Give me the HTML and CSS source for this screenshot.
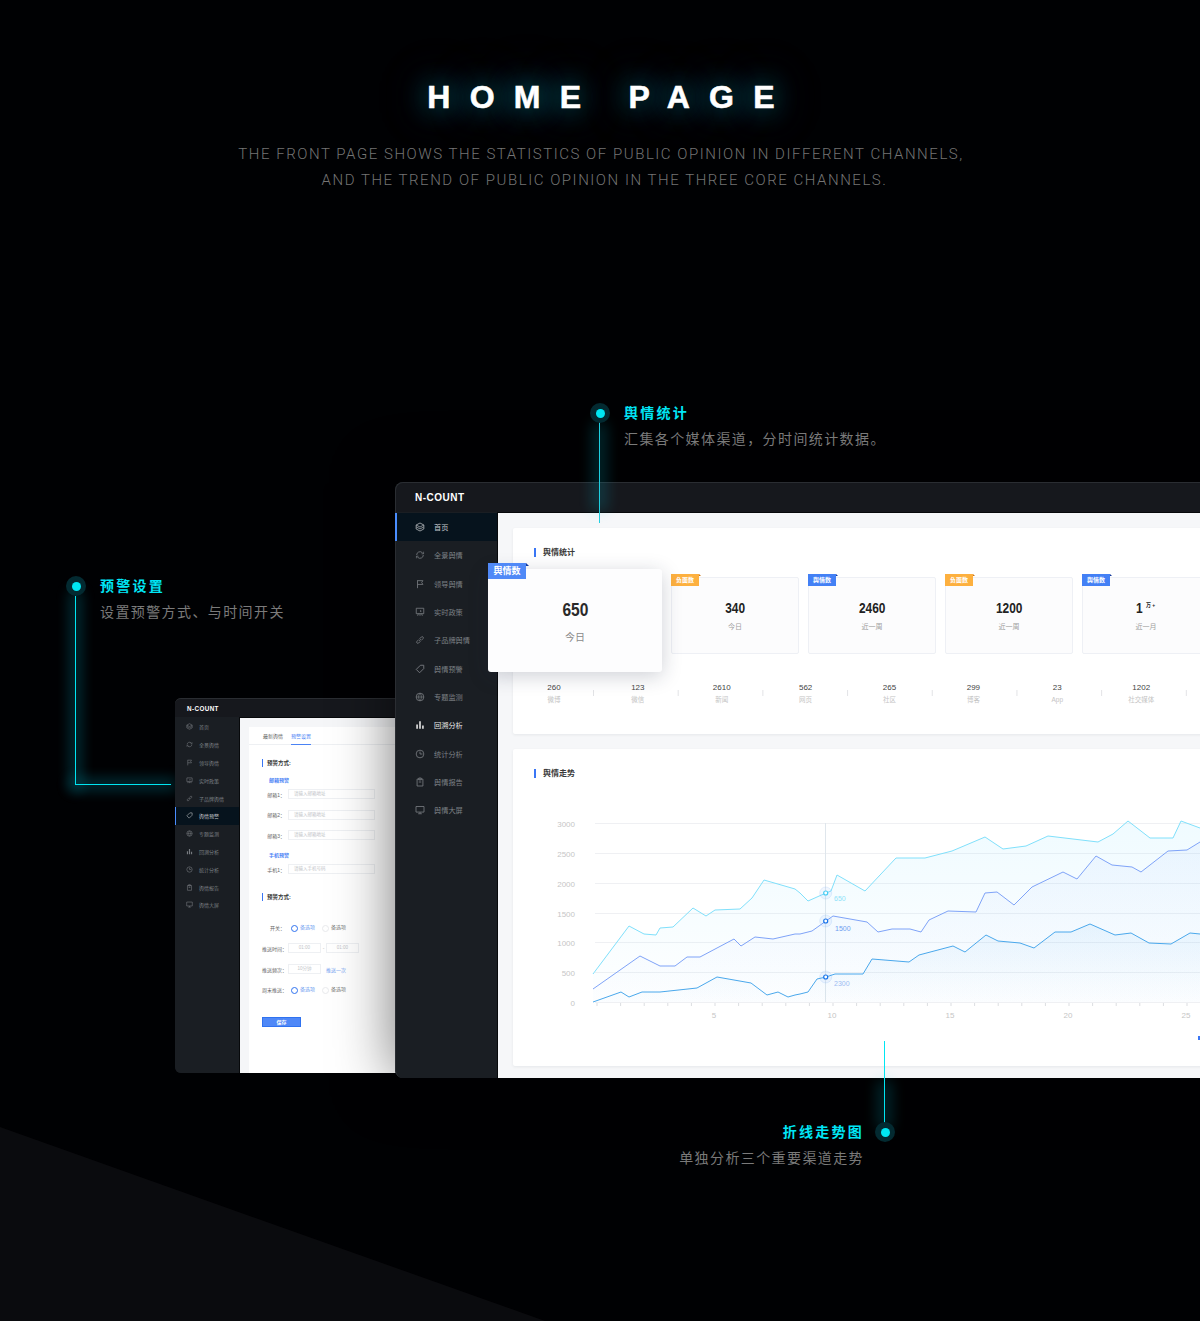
FILE: index.html
```html
<!DOCTYPE html>
<html lang="zh">
<head>
<meta charset="utf-8">
<title>Home Page</title>
<link rel="stylesheet" href="styles.css">
</head>
<body>
<svg class="defs" width="0" height="0" aria-hidden="true">
  <symbol id="i-cube" viewBox="0 0 12 12"><path d="M6 1.2 10.6 3.6V8.4L6 10.8 1.4 8.4V3.6Z" fill="none" stroke="currentColor" stroke-width="1"/><path d="M1.4 3.6 6 6 10.6 3.6M1.6 6 6 8.3 10.4 6" fill="none" stroke="currentColor" stroke-width=".9"/></symbol>
  <symbol id="i-sync" viewBox="0 0 12 12"><path d="M2 6a4 4 0 0 1 6.8-2.8L10 4.4M10 6a4 4 0 0 1-6.8 2.8L2 7.6" fill="none" stroke="currentColor" stroke-width="1"/><path d="M10.3 2v2.6H7.8M1.7 10V7.4h2.5" fill="none" stroke="currentColor" stroke-width=".8"/></symbol>
  <symbol id="i-flag" viewBox="0 0 12 12"><path d="M3 1.5V11M3 2H9.5L8 4.2 9.5 6.5H3" fill="none" stroke="currentColor" stroke-width="1"/></symbol>
  <symbol id="i-board" viewBox="0 0 12 12"><path d="M1.5 1.5H10.5V8H1.5ZM4 8 3.2 10.5M8 8 8.8 10.5M6 8V10.5" fill="none" stroke="currentColor" stroke-width="1"/><path d="M6.5 3.2 8 5 6 6Z" fill="currentColor"/></symbol>
  <symbol id="i-link" viewBox="0 0 12 12"><path d="M5 7 7 5M4.6 5.4 2.4 7.6a1.4 1.4 0 0 0 2 2L6.6 7.4M7.4 6.6 9.6 4.4a1.4 1.4 0 0 0-2-2L5.4 4.6" fill="none" stroke="currentColor" stroke-width="1"/></symbol>
  <symbol id="i-tag" viewBox="0 0 12 12"><path d="M6.5 1.5H10.500V5.500L5.500 10.500 1.500 6.500Z" fill="none" stroke="currentColor" stroke-width="1.100" stroke-linejoin="round"/></symbol>
  <symbol id="i-globe" viewBox="0 0 12 12"><circle cx="6" cy="6" r="4.600" fill="none" stroke="currentColor" stroke-width="1"/><path d="M1.400 6H10.600M6 1.400C3.700 4 3.700 8 6 10.600M6 1.400C8.300 4 8.300 8 6 10.600" fill="none" stroke="currentColor" stroke-width=".8"/></symbol>
  <symbol id="i-bars" viewBox="0 0 12 12"><path d="M1.500 5.500H3.500V10.500H1.500ZM5 1.500H7V10.500H5ZM8.500 6.500H10.500V10.500H8.500Z" fill="currentColor"/></symbol>
  <symbol id="i-clock" viewBox="0 0 12 12"><circle cx="6" cy="6" r="4.600" fill="none" stroke="currentColor" stroke-width="1"/><path d="M6 3V6H9" fill="none" stroke="currentColor" stroke-width="1"/></symbol>
  <symbol id="i-clip" viewBox="0 0 12 12"><path d="M2.500 2.500H9.500V10.800H2.500ZM4.500 1.200H7.500V3.500H4.500ZM4.500 6H7.500" fill="none" stroke="currentColor" stroke-width="1"/></symbol>
  <symbol id="i-screen" viewBox="0 0 12 12"><path d="M1.200 1.800H10.800V8.500H1.200ZM6 8.500V10.500M3.800 10.500H8.200" fill="none" stroke="currentColor" stroke-width="1"/></symbol>
</svg>

<div class="page">
  <div class="wedge"></div>

  <header class="hero">
    <h1 class="hero-title">HOME PAGE</h1>
    <p class="hero-sub">THE FRONT PAGE SHOWS THE STATISTICS OF PUBLIC OPINION IN DIFFERENT CHANNELS,<br><span class="hero-sub-2">AND THE TREND OF PUBLIC OPINION IN THE THREE CORE CHANNELS.</span></p>
  </header>

  <div class="wire wire-left-v"></div>
  <div class="wire wire-left-h"></div>
  <div class="callout callout-left">
    <span class="dot"></span>
    <div class="callout-text">
      <h2 class="callout-title">预警设置</h2>
      <p class="callout-desc">设置预警方式、与时间开关</p>
    </div>
  </div>

  <section class="win win-small">
    <div class="bar"><b class="brand">N-COUNT</b></div>
    <nav class="side">
      <a class="item"><svg class="ico"><use href="#i-cube"/></svg>首页</a>
      <a class="item"><svg class="ico"><use href="#i-sync"/></svg>全景舆情</a>
      <a class="item"><svg class="ico"><use href="#i-flag"/></svg>领导舆情</a>
      <a class="item"><svg class="ico"><use href="#i-board"/></svg>实时政策</a>
      <a class="item"><svg class="ico"><use href="#i-link"/></svg>子品牌舆情</a>
      <a class="item is-active"><svg class="ico"><use href="#i-tag"/></svg>舆情预警</a>
      <a class="item"><svg class="ico"><use href="#i-globe"/></svg>专题监测</a>
      <a class="item"><svg class="ico"><use href="#i-bars"/></svg>回溯分析</a>
      <a class="item"><svg class="ico"><use href="#i-clock"/></svg>统计分析</a>
      <a class="item"><svg class="ico"><use href="#i-clip"/></svg>舆情报告</a>
      <a class="item"><svg class="ico"><use href="#i-screen"/></svg>舆情大屏</a>
    </nav>
    <main class="small-main">
      <div class="small-card">
        <div class="tabs"><span class="tab">最新舆情</span><span class="tab is-on">预警设置</span></div>
        <div class="form">
          <h3 class="form-head form-head-1">预警方式:</h3>
          <p class="form-sub form-sub-1">邮箱预警</p>
          <div class="frow r1"><label>邮箱1：</label><span class="field wide">请输入邮箱地址</span></div>
          <div class="frow r2"><label>邮箱2：</label><span class="field wide">请输入邮箱地址</span></div>
          <div class="frow r2"><label>邮箱3：</label><span class="field wide">请输入邮箱地址</span></div>
          <p class="form-sub form-sub-2">手机预警</p>
          <div class="frow r1"><label>手机1：</label><span class="field wide">请输入手机号码</span></div>
          <h3 class="form-head form-head-2">预警方式:</h3>
          <div class="frow r3"><label>开关：</label><span class="radio on">备选项</span><span class="radio">备选项</span></div>
          <div class="frow r4"><label>推送时间：</label><span class="field short">01:00</span><span class="dash">-</span><span class="field short">01:00</span></div>
          <div class="frow r4"><label>推送频次：</label><span class="field short">10分钟</span><span class="once">推送一次</span></div>
          <div class="frow r5"><label>周末推送：</label><span class="radio on">备选项</span><span class="radio">备选项</span></div>
          <button class="save">保存</button>
        </div>
      </div>
    </main>
  </section>

  <section class="win win-main">
    <div class="bar"><b class="brand">N-COUNT</b></div>
    <nav class="side">
      <a class="item is-active"><svg class="ico"><use href="#i-cube"/></svg>首页</a>
      <a class="item"><svg class="ico"><use href="#i-sync"/></svg>全景舆情</a>
      <a class="item"><svg class="ico"><use href="#i-flag"/></svg>领导舆情</a>
      <a class="item"><svg class="ico"><use href="#i-board"/></svg>实时政策</a>
      <a class="item"><svg class="ico"><use href="#i-link"/></svg>子品牌舆情</a>
      <a class="item"><svg class="ico"><use href="#i-tag"/></svg>舆情预警</a>
      <a class="item"><svg class="ico"><use href="#i-globe"/></svg>专题监测</a>
      <a class="item is-bright"><svg class="ico"><use href="#i-bars"/></svg>回溯分析</a>
      <a class="item"><svg class="ico"><use href="#i-clock"/></svg>统计分析</a>
      <a class="item"><svg class="ico"><use href="#i-clip"/></svg>舆情报告</a>
      <a class="item"><svg class="ico"><use href="#i-screen"/></svg>舆情大屏</a>
    </nav>
    <main class="main">
      <section class="card card-stats">
        <h3 class="card-title">舆情统计</h3>
        <div class="tiles">
          <div class="tile tile-hero"><span class="tag">舆情数</span><strong>650</strong><em>今日</em></div>
          <div class="tile"><span class="tag tag-o">负面数</span><strong>340</strong><em>今日</em></div>
          <div class="tile"><span class="tag">舆情数</span><strong>2460</strong><em>近一周</em></div>
          <div class="tile"><span class="tag tag-o">负面数</span><strong>1200</strong><em>近一周</em></div>
          <div class="tile"><span class="tag">舆情数</span><strong>1<sup>万 +</sup></strong><em>近一月</em></div>
        </div>
        <ul class="channels">
          <li><b>260</b><span>微博</span></li>
          <li><b>123</b><span>微信</span></li>
          <li><b>2610</b><span>新闻</span></li>
          <li><b>562</b><span>网页</span></li>
          <li><b>265</b><span>社区</span></li>
          <li><b>299</b><span>博客</span></li>
          <li><b>23</b><span>App</span></li>
          <li><b>1202</b><span>社交媒体</span></li>
        </ul>
      </section>
      <section class="card card-trend">
        <h3 class="card-title">舆情走势</h3>
        <svg class="chart" viewBox="513 790 700 250" width="700" height="250">
          <defs>
            <linearGradient id="fa" x1="0" y1="0" x2="0" y2="1"><stop offset="0" stop-color="#7fdcff" stop-opacity=".12"/><stop offset="1" stop-color="#7fdcff" stop-opacity=".01"/></linearGradient>
            <linearGradient id="fb" x1="0" y1="0" x2="0" y2="1"><stop offset="0" stop-color="#7d9ffb" stop-opacity=".07"/><stop offset="1" stop-color="#7d9ffb" stop-opacity=".01"/></linearGradient>
            <linearGradient id="fc" x1="0" y1="0" x2="0" y2="1"><stop offset="0" stop-color="#59b0f0" stop-opacity=".09"/><stop offset="1" stop-color="#59b0f0" stop-opacity=".01"/></linearGradient>
          </defs>
          <g class="grid">
            <path d="M595 823.500H1200M595 853.500H1200M595 883.500H1200M595 913.500H1200M595 942.500H1200M595 972.500H1200M595 1002.500H1200"/>
          </g>
          <g class="ylab">
            <text x="575" y="827">3000</text><text x="575" y="857">2500</text><text x="575" y="887">2000</text><text x="575" y="917">1500</text><text x="575" y="946">1000</text><text x="575" y="976">500</text><text x="575" y="1006">0</text>
          </g>
          <path class="ticks" d="M596.500 1004.500H1200"/>
          <g class="xlab">
            <text x="714" y="1018">5</text><text x="832" y="1018">10</text><text x="950" y="1018">15</text><text x="1068" y="1018">20</text><text x="1186" y="1018">25</text>
          </g>
          <path class="cross" d="M825.500 823V1002"/>
          <polygon fill="url(#fa)" points="593,974 629,926 644,934 656,935 660,928 673,927 693,908 706,916 715,910 740,909 752,898 764,880 795,889 800,893 808,901 826,893 831,891 837,875 865,891 896,858 925,858 952,851 985,837 1003,849 1026,846 1048,836 1098,842 1113,834 1128,821 1150,838 1173,838 1181,821 1200,828 1200,1002 593,1002"/>
          <polygon fill="url(#fb)" points="593,989 640,956 660,966 675,966 687,957 700,957 734,939 741,946 755,937 773,939 795,934 800,934 812,931 826,921 833,916 867,922 878,932 892,929 910,929 921,932 929,920 948,911 976,912 985,893 997,892 1014,905 1032,887 1063,872 1077,879 1096,856 1112,865 1132,867 1141,872 1168,851 1187,850 1200,842 1200,1002 593,1002"/>
          <polygon fill="url(#fc)" points="593,1002 621,992 629,997 642,992 660,992 697,988 717,977 751,983 767,995 778,992 788,997 795,995 800,994 808,992 817,979 826,977 835,974 863,974 872,959 909,962 919,955 953,946 965,952 986,935 998,941 1020,943 1034,948 1055,932 1071,932 1090,924 1115,935 1131,933 1149,943 1171,944 1190,933 1200,934 1200,1002 593,1002"/>
          <polyline class="ln ln-a" points="593,974 629,926 644,934 656,935 660,928 673,927 693,908 706,916 715,910 740,909 752,898 764,880 795,889 800,893 808,901 826,893 831,891 837,875 865,891 896,858 925,858 952,851 985,837 1003,849 1026,846 1048,836 1098,842 1113,834 1128,821 1150,838 1173,838 1181,821 1200,828"/>
          <polyline class="ln ln-b" points="593,989 640,956 660,966 675,966 687,957 700,957 734,939 741,946 755,937 773,939 795,934 800,934 812,931 826,921 833,916 867,922 878,932 892,929 910,929 921,932 929,920 948,911 976,912 985,893 997,892 1014,905 1032,887 1063,872 1077,879 1096,856 1112,865 1132,867 1141,872 1168,851 1187,850 1200,842"/>
          <polyline class="ln ln-c" points="593,1002 621,992 629,997 642,992 660,992 697,988 717,977 751,983 767,995 778,992 788,997 795,995 800,994 808,992 817,979 826,977 835,974 863,974 872,959 909,962 919,955 953,946 965,952 986,935 998,941 1020,943 1034,948 1055,932 1071,932 1090,924 1115,935 1131,933 1149,943 1171,944 1190,933 1200,934"/>
          <circle class="halo" cx="825.700" cy="893" r="6"/><circle class="pt pt-a" cx="825.700" cy="893" r="2"/>
          <circle class="halo" cx="825.700" cy="921" r="6"/><circle class="pt pt-b" cx="825.700" cy="921" r="2"/>
          <circle class="halo" cx="825.700" cy="977" r="6"/><circle class="pt pt-c" cx="825.700" cy="977" r="2"/>
          <text class="val val-a" x="834" y="900.500">650</text>
          <text class="val val-b" x="835" y="930.500">1500</text>
          <text class="val val-c" x="834" y="986">2300</text>
          <rect class="legend" x="1198" y="1036" width="4" height="4"/>
        </svg>
      </section>
    </main>
  </section>

  <div class="glow glow-top"></div>
  <div class="wire-plain wire-top"></div>
  <div class="callout callout-top">
    <span class="dot"></span>
    <div class="callout-text">
      <h2 class="callout-title">舆情统计</h2>
      <p class="callout-desc">汇集各个媒体渠道，分时间统计数据。</p>
    </div>
  </div>

  <div class="glow glow-bottom"></div>
  <div class="wire-plain wire-bottom"></div>
  <div class="callout callout-bottom">
    <span class="dot"></span>
    <div class="callout-text">
      <h2 class="callout-title">折线走势图</h2>
      <p class="callout-desc">单独分析三个重要渠道走势</p>
    </div>
  </div>
</div>
</body>
</html>
```

FILE: styles.css
```css
* { box-sizing: border-box; }
html, body { margin: 0; padding: 0; background: #000; }
body { font-family: "Liberation Sans", "Noto Sans CJK SC", sans-serif; }
.defs { position: absolute; }
.page { position: relative; width: 1200px; height: 1321px; overflow: hidden; background: #000103; }
.wedge { position: absolute; left: 0; top: 1127px; width: 545px; height: 194px; background: #0a0b0e; clip-path: polygon(0 0, 100% 100%, 0 100%); }

/* hero */
.hero { padding-top: 78px; text-align: center; }
.hero-title { margin: 0 0 0 21px; font-size: 32px; line-height: 38px; font-weight: 700; letter-spacing: 19.250px; color: #fff; -webkit-text-stroke: .6px #fff; text-shadow: 0 0 26px rgba(0, 190, 215, .6), 0 0 40px rgba(0, 170, 200, .5), 0 0 60px rgba(0, 160, 190, .35); }
.hero-sub { margin: 25px 0 0; padding-left: 2px; font-family: Roboto, "Liberation Sans", sans-serif; font-size: 15px; line-height: 26px; letter-spacing: 1.535px; color: #747474; font-weight: 300; }
.hero-sub-2 { margin-left: 7px; }

/* callouts */
.callout { position: absolute; display: flex; gap: 14px; z-index: 5; }
.callout-top { left: 590px; top: 403px; }
.callout-left { left: 66px; top: 576px; }
.callout-bottom { right: 305px; top: 1122px; flex-direction: row-reverse; gap: 11px; text-align: right; }
.dot { flex: none; width: 20px; height: 20px; border-radius: 50%; background: #032a31; display: flex; align-items: center; justify-content: center; }
.dot::before { content: ""; width: 9px; height: 9px; border-radius: 50%; background: #00e6f2; }
.callout-title { margin: 0; font-size: 14px; line-height: 20px; font-weight: 700; letter-spacing: 2.250px; color: #00e6f6; }
.callout-desc { margin: 6px 0 0; font-size: 14px; line-height: 20px; letter-spacing: 1.400px; color: #7a7a7a; white-space: nowrap; }

/* connector lines */
.wire, .wire-plain { position: absolute; background: #00e6f2; }
.wire { box-shadow: 0 0 14px 5px rgba(0, 190, 215, .28); }
.wire-left-v { left: 75px; top: 596px; width: 1px; height: 189px; }
.wire-left-h { left: 75px; top: 784px; width: 96px; height: 1px; }
.wire-top { left: 599px; top: 420px; width: 1px; height: 103px; z-index: 4; background: #1fcfe0; }
.wire-bottom { left: 884px; top: 1041px; width: 1px; height: 82px; z-index: 4; }
.glow { position: absolute; width: 1px; background: transparent; box-shadow: 0 0 14px 7px rgba(0, 190, 215, .2); z-index: 3; }
.glow-top { left: 599px; top: 430px; height: 74px; }
.glow-bottom { left: 884px; top: 1088px; height: 34px; }

/* window shell */
.win { position: absolute; display: grid; overflow: visible; }
.bar { grid-column: 1 / 3; display: flex; align-items: center; background: #16181d; }
.brand { color: #fff; font-weight: 700; white-space: nowrap; }
.side { display: flex; flex-direction: column; background: #1a1e23; border-right: 1px solid #07090b; padding-top: 1px; }
.item { display: flex; align-items: center; color: #7c8085; white-space: nowrap; position: relative; flex: none; }
.ico { flex: none; color: #777b80; }
.item.is-active { background: #06131d; color: #c4c8cc; }
.item.is-active .ico { color: #aeb2b6; }
.item.is-active::before { content: ""; position: absolute; left: 0; top: 0; bottom: 0; background: #4a8dff; }
.item.is-bright { color: #e8e8e8; }
.item.is-bright .ico { color: #dcdcdc; }

/* big window */
.win-main { left: 395px; top: 482px; width: 900px; height: 596px; grid-template-columns: 103px 1fr; grid-template-rows: 30px 566px; border-radius: 8px 0 0 8px; box-shadow: 0 0 60px rgba(0, 0, 0, .55); z-index: 2; background: #1a1e23; }
.win-main .bar { border-radius: 8px 0 0 0; border-top: 1px solid #2a2d32; border-left: 1px solid #2a2d32; padding-left: 19px; }
.win-main .brand { font-size: 10px; letter-spacing: .5px; }
.win-main .side { border-radius: 0 0 0 8px; border-left: 1px solid #2a2d32; }
.win-main .item { height: 28.300px; padding-left: 19px; font-size: 7.200px; gap: 9px; }
.win-main .ico { width: 10px; height: 10px; }
.win-main .item.is-active::before { width: 2px; left: -1px; }
.main { background: #f6f7f9; padding: 15px 15px 0; border-top: 1px solid #07090b; min-width: 0; }
.card { background: #fff; border-radius: 2px; box-shadow: 0 1px 3px rgba(40, 50, 70, .08); }
.card-stats { height: 206px; padding-top: 20px; }
.card-trend { height: 317px; margin-top: 15px; padding-top: 20px; }
.card-title { margin: 0 0 0 21px; padding-left: 7px; border-left: 2px solid #3a76f5; height: 9px; font-size: 8px; line-height: 9px; font-weight: 700; color: #3a3a3a; white-space: nowrap; }
.tiles { display: flex; align-items: flex-start; gap: 9px; margin: 12px 0 0 -25px; height: 103px; }
.tile { position: relative; flex: none; width: 128px; height: 77px; margin-top: 8px; background: #fcfcfd; border: 1px solid #eef0f5; border-radius: 2px; display: flex; flex-direction: column; align-items: center; padding-top: 23px; }
.tile strong { font-size: 14.500px; line-height: 14px; font-weight: 700; color: #222; white-space: nowrap; transform: scaleX(.82); }
.tile sup { font-size: 6px; line-height: 0; margin-left: 4px; vertical-align: 6px; letter-spacing: 0; }
.tile em { margin-top: 7px; font-style: normal; font-size: 7px; line-height: 10px; color: #a0a0a0; }
.tile-hero { width: 174px; height: 103px; margin-top: 0; background: #fdfdfe; border: 0; border-radius: 3px; padding-top: 32px; box-shadow: 0 4px 20px rgba(30, 40, 70, .22); z-index: 3; }
.tile-hero strong { font-size: 18.500px; line-height: 18px; color: #2a2a2a; transform: scaleX(.84); }
.tile-hero em { margin-top: 12px; font-size: 10px; line-height: 14px; color: #8a8a8a; }
.tag { position: absolute; left: -1px; top: -4px; width: 28px; height: 12px; background: #4380f5; color: #fff; font-size: 6px; line-height: 12px; text-align: center; font-weight: 700; }
.tag::after { content: ""; position: absolute; right: -2px; top: 0; border-left: 2px solid #12399c; border-top: 2px solid transparent; }
.tag-o { background: #fdb03f; }
.tag-o::after { border-left-color: #c9761a; }
.tile-hero .tag { left: 0; top: -6px; width: 38px; height: 16px; background: #5089f7; font-size: 9px; line-height: 16px; }
.tile-hero .tag::after { right: -3px; border-left-width: 3px; border-top-width: 3px; }
.channels { list-style: none; display: flex; margin: 10px 0 0 -1px; padding: 0; background-image: repeating-linear-gradient(90deg, #e2e3e6 0, #e2e3e6 1px, transparent 1px, transparent 84.700px); background-size: 84.700px 6px; background-repeat: repeat-x; background-position: 81px 8px; }
.channels li { flex: none; width: 83.900px; display: flex; flex-direction: column; align-items: center; }
.channels b { font-weight: 400; font-size: 8px; line-height: 11px; color: #444; }
.channels span { margin-top: 2px; font-size: 6.500px; line-height: 10px; color: #c4c4c4; white-space: nowrap; }
.chart { display: block; margin-top: 12px; overflow: visible; }
.grid path { fill: none; stroke: #eff0f3; stroke-width: 1; }
.ylab text { font-size: 8px; fill: #c6c6c6; text-anchor: end; }
.xlab text { font-size: 8px; fill: #c6c6c6; text-anchor: middle; }
.ticks { fill: none; stroke: #dcdee2; stroke-width: 3; stroke-dasharray: 1 22.600; }
.cross { fill: none; stroke: #dfe6ec; stroke-width: 1; }
.ln { fill: none; stroke-width: 1; stroke-linejoin: round; }
.ln-a { stroke: #80e0fb; }
.ln-b { stroke: #7fa3f8; }
.ln-c { stroke: #4aa8ec; }
.halo { fill: rgba(120, 170, 245, .1); stroke: rgba(120, 170, 245, .18); stroke-width: 1; }
.pt { fill: #fff; stroke-width: 1.200; }
.pt-a { stroke: #48cdf4; }
.pt-b, .pt-c { stroke: #1a74ea; }
.val { font-size: 7px; }
.val-a { fill: #8fe3f9; }
.val-b { fill: #6f9df0; }
.val-c { fill: #9dbcf2; }
.legend { fill: #3a76f5; }

/* small window */
.win-small { left: 175px; top: 698px; width: 240px; height: 375px; grid-template-columns: 65px 1fr; grid-template-rows: 19px 356px; border-radius: 6px 0 0 6px; background: #1a1e23; z-index: 1; }
.win-small .bar { border-radius: 6px 0 0 0; padding-left: 12px; border-top: 1px solid #2a2d32; }
.win-small .brand { font-size: 6.300px; letter-spacing: .4px; }
.win-small .side { border-radius: 0 0 0 6px; }
.win-small .item { height: 17.800px; padding-left: 11px; font-size: 5px; gap: 6px; }
.win-small .ico { width: 7px; height: 7px; }
.win-small .item.is-active::before { width: 1px; }
.small-main { background: #f5f6f8; padding: 9px 0 0 9px; border-top: 1px solid #07090b; min-width: 0; }
.small-card { height: 100%; background: #fff; }
.tabs { display: flex; height: 18px; padding-left: 14px; gap: 8px; border-bottom: 1px solid #eef0f3; }
.tab { height: 18px; width: 20px; font-size: 5px; line-height: 18px; color: #666; white-space: nowrap; }
.tab.is-on { color: #4a83f5; border-bottom: 1px solid #4a83f5; }
.form { padding-left: 13px; font-size: 5px; color: #555; }
.form-head { margin: 0; height: 8px; padding-left: 4px; border-left: 1px solid #3a76f5; font-size: 5.500px; line-height: 8px; font-weight: 700; color: #333; }
.form-head-1 { margin-top: 14px; }
.form-head-2 { margin-top: 19px; }
.form-sub { margin: 0 0 0 7px; height: 6px; line-height: 6px; color: #4a83f5; font-size: 5px; font-weight: 700; }
.form-sub-1 { margin-top: 10px; }
.form-sub-2 { margin-top: 12px; }
.frow { display: flex; align-items: center; height: 10px; white-space: nowrap; }
.frow label { flex: none; width: 23px; text-align: right; margin-right: 3px; color: #666; }
.r1 { margin-top: 6px; }
.r2 { margin-top: 10.500px; }
.r3 { margin-top: 21px; }
.r4 { margin-top: 11px; }
.r5 { margin-top: 10px; }
.field { flex: none; height: 10px; padding-left: 5px; border: 1px solid #eef0f3; font-size: 4.500px; line-height: 8px; color: #c2c4c8; }
.wide { width: 87px; }
.short { width: 33px; padding-left: 0; text-align: center; }
.dash { width: 5px; text-align: center; color: #bbb; }
.once { margin-left: 5px; color: #6f9df0; }
.radio { position: relative; flex: none; width: 31px; padding-left: 12px; line-height: 6px; color: #777; }
.radio::before { content: ""; position: absolute; left: 3px; top: .5px; width: 5px; height: 5px; border: 1px solid #e9eaed; border-radius: 50%; background: #fff; }
.radio.on { color: #6f9df0; }
.radio.on::before { border: 1.500px solid #2f72f0; }
.save { display: block; width: 39px; height: 10px; margin-top: 23px; padding: 0; border: 1px solid #2f72f0; background: #4f88f7; color: #fff; font: 700 5px/8px "Liberation Sans", "Noto Sans CJK SC", sans-serif; }
```
